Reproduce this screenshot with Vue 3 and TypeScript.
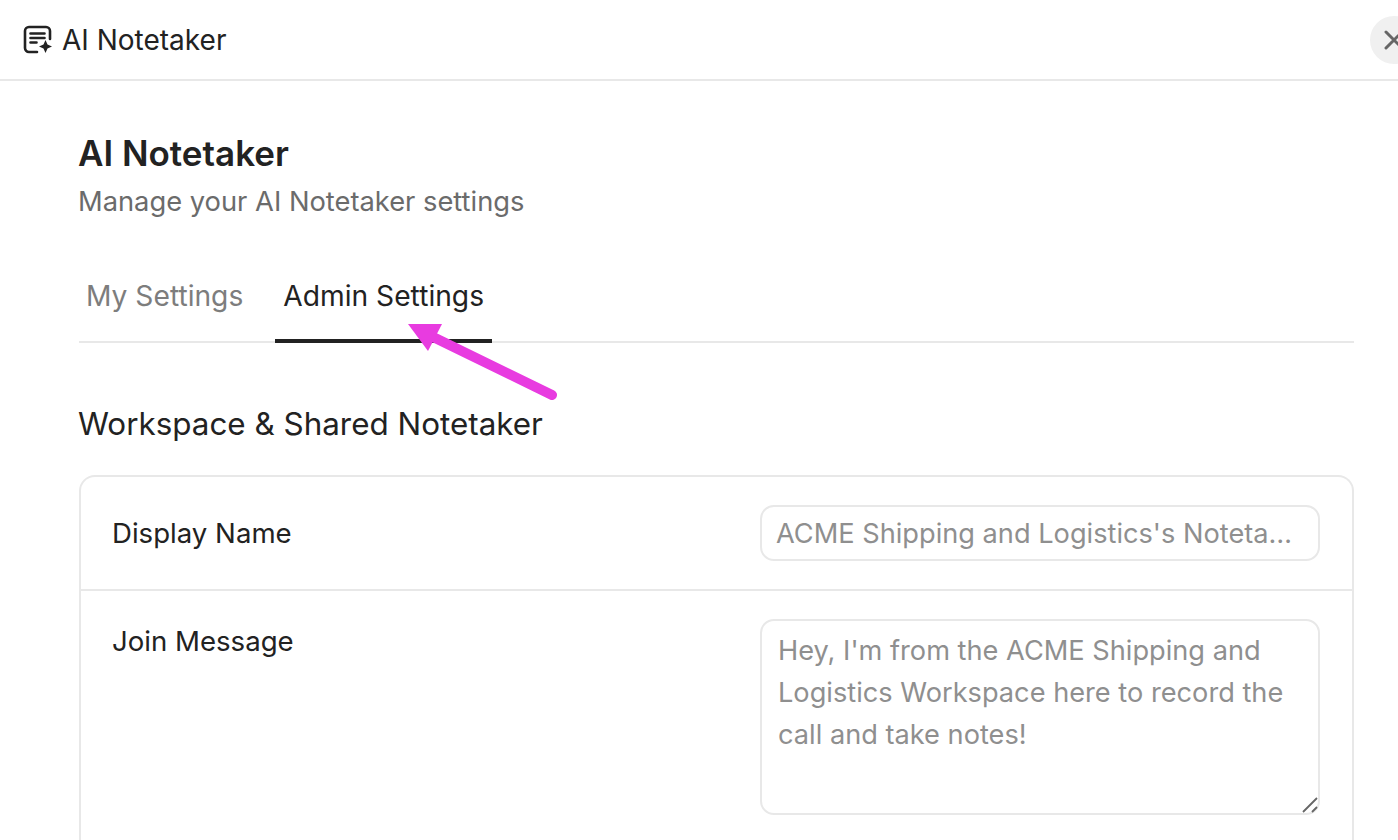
<script setup lang="ts">
const title = 'AI Notetaker'
const tabs = [
  { label: 'My Settings', active: false },
  { label: 'Admin Settings', active: true },
]
</script>

<template>
  <div class="page">
    <header class="topbar">
      <div class="brand">
        <svg class="brand-icon" width="30" height="30" viewBox="0 0 30 30" fill="none">
          <path d="M14 27H6a4 4 0 0 1-4-4V6a4 4 0 0 1 4-4h17a4 4 0 0 1 4 4v8" stroke="#222" stroke-width="2.600" stroke-linecap="round"/>
          <path d="M7.500 8.500h14M7.500 13h14M7.500 17.500h6" stroke="#222" stroke-width="2.600" stroke-linecap="round"/>
          <path d="M22.500 15l2 4.500 4.500 2-4.500 2-2 4.500-2-4.500-4.500-2 4.500-2z" fill="#222"/>
        </svg>
        <span class="brand-name">{{ title }}</span>
      </div>
      <button class="close" type="button" aria-label="Close">
        <svg width="22" height="22" viewBox="0 0 22 22" fill="none">
          <path d="M3 3l16 16M19 3L3 19" stroke="#666" stroke-width="3" stroke-linecap="round"/>
        </svg>
      </button>
    </header>

    <main class="content">
      <h1 class="title">{{ title }}</h1>
      <p class="subtitle">Manage your AI Notetaker settings</p>

      <nav class="tabs">
        <div v-for="tab in tabs" :key="tab.label" class="tab" :class="{ active: tab.active }">{{ tab.label }}</div>
      </nav>

      <h2 class="section">Workspace &amp; Shared Notetaker</h2>

      <section class="card">
        <div class="row row-name">
          <label class="label">Display Name</label>
          <input class="field input" type="text" placeholder="ACME Shipping and Logistics's Notetaker" />
        </div>
        <div class="row row-message">
          <label class="label">Join Message</label>
          <div class="area-wrap">
            <textarea class="field area" placeholder="Hey, I'm from the ACME Shipping and Logistics Workspace here to record the call and take notes!"></textarea>
            <svg class="grip" width="16" height="16" viewBox="0 0 16 16" fill="none">
              <path d="M1 15L15 1M10 15l5-5" stroke="#666" stroke-width="1.800"/>
            </svg>
          </div>
        </div>
      </section>
    </main>

    <svg class="arrow" width="160" height="90" viewBox="0 0 160 90" fill="none">
      <path d="M151 73L28 13" stroke="#e83be0" stroke-width="10" stroke-linecap="round"/>
      <path d="M7 2H41L27 29z" fill="#e83be0"/>
    </svg>
  </div>
</template>

<style>
html, body { margin: 0; background: #fff; }
</style>

<style scoped>
.page {
  position: relative;
  width: 1398px;
  height: 840px;
  overflow: hidden;
  background: #fff;
  color: #222;
  font-family: Inter, "Liberation Sans", sans-serif;
}
.topbar {
  box-sizing: border-box;
  height: 81px;
  display: flex;
  align-items: center;
  justify-content: space-between;
  padding: 0 0 0 23px;
  border-bottom: 2px solid #e8e8e8;
}
.brand { display: flex; align-items: center; gap: 9px; }
.brand-icon { display: block; }
.brand-name { font-size: 28px; line-height: 34px; }
.close {
  flex: none;
  width: 48px;
  height: 48px;
  margin-right: -20px;
  padding: 0;
  border: 0;
  border-radius: 50%;
  background: #f0f0f0;
  display: flex;
  align-items: center;
  justify-content: center;
}
.content { padding: 0 44px 0 79px; }
.title {
  margin: 52px 0 0 -1px;
  font-size: 35px;
  line-height: 40px;
  font-weight: 600;
  color: #222;
}
.subtitle {
  margin: 13px 0 0 -1px;
  font-size: 27.300px;
  line-height: 32px;
  color: #6b6b6b;
}
.tabs {
  display: flex;
  margin-top: 47px;
  height: 78px;
  box-sizing: border-box;
  border-bottom: 2px solid #e8e8e8;
}
.tab {
  box-sizing: border-box;
  height: 78px;
  padding: 14px 8px 0;
  margin-right: 24px;
  font-size: 28.200px;
  line-height: 34px;
  color: #7d7d7d;
}
.tab:first-child { margin-left: -1px; }
.tab.active { color: #222; border-bottom: 4px solid #222; }
.section {
  margin: 62px 0 0 -1px;
  font-size: 31.400px;
  line-height: 38px;
  font-weight: 400;
}
.card {
  margin-top: 32px;
  border: 2px solid #e8e8e8;
  border-bottom: 0;
  border-radius: 16px 16px 0 0;
  height: 400px;
}
.row {
  box-sizing: border-box;
  display: flex;
  justify-content: space-between;
  padding: 0 32px 0 31px;
}
.row-name { height: 114px; align-items: center; border-bottom: 2px solid #e8e8e8; }
.row-message { padding-top: 28px; }
.label { font-size: 27.600px; line-height: 44px; font-weight: 400; color: #222; }
.field {
  box-sizing: border-box;
  width: 560px;
  border: 2px solid #e8e8e8;
  border-radius: 14px;
  background: #fff;
  color: #222;
  font-family: inherit;
  font-size: 27.200px;
  outline: none;
}
.field::placeholder { color: #8f8f8f; opacity: 1; }
.input { height: 56px; padding: 0 14px; }
.input:placeholder-shown { text-overflow: ellipsis; }
.area-wrap { position: relative; width: 560px; height: 196px; }
.area {
  display: block;
  width: 100%;
  height: 100%;
  padding: 9px 16px;
  line-height: 42px;
  resize: none;
}
.grip { position: absolute; right: 2px; bottom: 2px; }
.arrow { position: absolute; left: 401px; top: 322px; pointer-events: none; }
</style>
